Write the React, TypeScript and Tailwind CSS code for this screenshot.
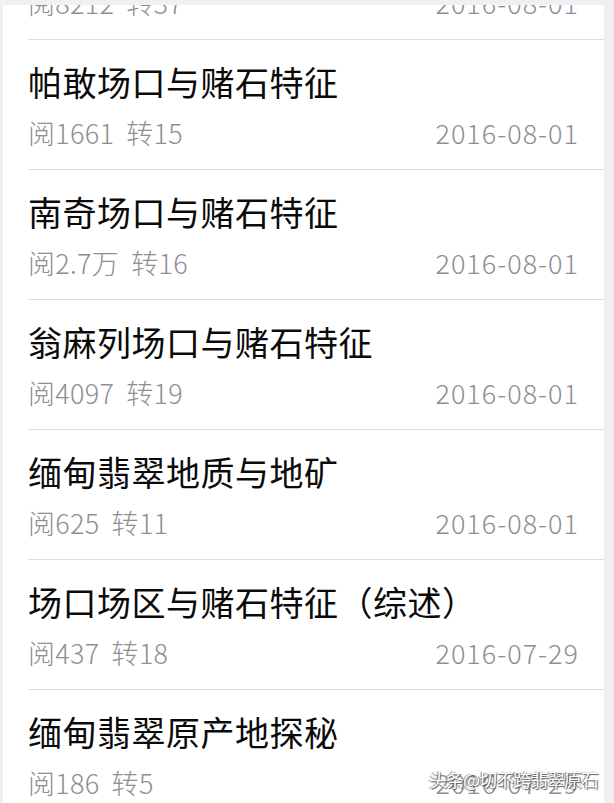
import React from 'react';

interface Article {
    title: string;
    reads: string;
    shares: string;
    date: string;
}

const articles: Article[] = [
    { title: '木那场口与赌石特征', reads: '8212', shares: '37', date: '2016-08-01' },
    { title: '帕敢场口与赌石特征', reads: '1661', shares: '15', date: '2016-08-01' },
    { title: '南奇场口与赌石特征', reads: '2.7万', shares: '16', date: '2016-08-01' },
    { title: '翁麻列场口与赌石特征', reads: '4097', shares: '19', date: '2016-08-01' },
    { title: '缅甸翡翠地质与地矿', reads: '625', shares: '11', date: '2016-08-01' },
    { title: '场口场区与赌石特征（综述）', reads: '437', shares: '18', date: '2016-07-29' },
    { title: '缅甸翡翠原产地探秘', reads: '186', shares: '5', date: '2016-07-29' },
];

const ArticleRow: React.FC<{ article: Article }> = ({ article }) => {
    return (
        <div className="h-[130px] pt-[25px] border-b border-[#dcdcdf] ml-[25px]">
            <div className="h-[34px] text-[34px] leading-[34px] tracking-[0.5px] text-[#0a0a0a] whitespace-nowrap">
                {article.title}
            </div>
            <div className="flex justify-between mt-[20px] pr-[25px] h-[27px] text-[27px] leading-[27px] font-light text-[#8e8e93]">
                <span className="tracking-[0.3px]">
                    阅{article.reads}<span className="ml-[12px]">转{article.shares}</span>
                </span>
                <span className="tracking-[1px]">{article.date}</span>
            </div>
        </div>
    );
};

export default function App() {
    return (
        <div
            className="w-[614px] h-[803px] bg-[#efeff4] pt-[5px] pl-[3px] pr-[10px] overflow-hidden relative"
            style={{ fontFamily: '"Noto Sans CJK SC", "Noto Sans", sans-serif' }}
        >
            <div className="bg-white h-full overflow-hidden">
                <div className="-mt-[95px]">
                    {articles.map((article, i) => (
                        <ArticleRow key={i} article={article} />
                    ))}
                </div>
            </div>
            {/* 水印 */}
            <div
                className="absolute right-[16px] bottom-[15px] text-[18px] leading-none text-white tracking-[-1px]"
                style={{ textShadow: '1px 1px 1px #555, -1px 0 1px #777' }}
            >
                头条@切不跨翡翠原石
            </div>
        </div>
    );
}
